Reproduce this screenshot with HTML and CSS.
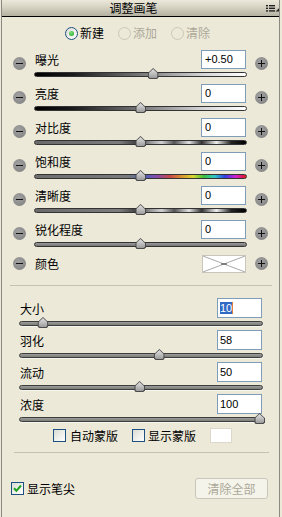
FILE: index.html
```html
<!DOCTYPE html>
<html lang="zh-CN">
<head>
    <meta charset="UTF-8">
    <meta name="viewport" content="width=device-width, initial-scale=1.0">
    <title>调整画笔</title>
    <link rel="stylesheet" href="styles.css">
</head>
<body>
    <div class="panel">
        <div class="titlebar">
            <span class="title">调整画笔</span>
            <svg class="menu-icon" width="13" height="7" viewBox="0 0 13 7">
                <rect x="0" y="0" width="2" height="1.4" fill="#222"/>
                <rect x="3" y="0" width="6" height="1.4" fill="#222"/>
                <rect x="0" y="2.6" width="2" height="1.4" fill="#222"/>
                <rect x="3" y="2.6" width="6" height="1.4" fill="#222"/>
                <rect x="0" y="5.2" width="2" height="1.4" fill="#222"/>
                <rect x="3" y="5.2" width="6" height="1.4" fill="#222"/>
                <path d="M13 3.2V6.6H9.6z" fill="#222"/>
            </svg>
        </div>

        <!-- mode -->
        <div class="modes">
            <label class="radio checked"><span class="radio-box"></span>新建</label>
            <label class="radio disabled"><span class="radio-box"></span>添加</label>
            <label class="radio disabled"><span class="radio-box"></span>清除</label>
        </div>

        <!-- adjustments -->
        <div class="adjustments">
            <div class="adj">
                <span class="step"></span>
                <div class="adj-body">
                    <div class="adj-head"><span class="adj-label">曝光</span><div class="field">+0.50</div></div>
                    <div class="track track-light"><span class="thumb" style="left:56%"></span></div>
                </div>
                <span class="step plus"></span>
            </div>
            <div class="adj">
                <span class="step"></span>
                <div class="adj-body">
                    <div class="adj-head"><span class="adj-label">亮度</span><div class="field">0</div></div>
                    <div class="track track-light"><span class="thumb" style="left:50%"></span></div>
                </div>
                <span class="step plus"></span>
            </div>
            <div class="adj">
                <span class="step"></span>
                <div class="adj-body">
                    <div class="adj-head"><span class="adj-label">对比度</span><div class="field">0</div></div>
                    <div class="track track-contrast"><span class="thumb" style="left:50%"></span></div>
                </div>
                <span class="step plus"></span>
            </div>
            <div class="adj">
                <span class="step"></span>
                <div class="adj-body">
                    <div class="adj-head"><span class="adj-label">饱和度</span><div class="field">0</div></div>
                    <div class="track track-saturation"><span class="thumb" style="left:50%"></span></div>
                </div>
                <span class="step plus"></span>
            </div>
            <div class="adj">
                <span class="step"></span>
                <div class="adj-body">
                    <div class="adj-head"><span class="adj-label">清晰度</span><div class="field">0</div></div>
                    <div class="track track-contrast"><span class="thumb" style="left:50%"></span></div>
                </div>
                <span class="step plus"></span>
            </div>
            <div class="adj">
                <span class="step"></span>
                <div class="adj-body">
                    <div class="adj-head"><span class="adj-label">锐化程度</span><div class="field">0</div></div>
                    <div class="track track-grey"><span class="thumb" style="left:50%"></span></div>
                </div>
                <span class="step plus"></span>
            </div>
            <div class="adj adj-color">
                <span class="step"></span>
                <div class="adj-body">
                    <div class="adj-head">
                        <span class="adj-label">颜色</span>
                        <svg class="swatch" width="44" height="18" viewBox="0 0 44 18">
                            <rect x="0.5" y="0.5" width="43" height="17" fill="#fff" stroke="#c9c7bd"/>
                            <path d="M1 1L43 17M43 1L1 17" stroke="#a9a9a9" stroke-width="1"/>
                            <path d="M19 9h6" stroke="#666" stroke-width="1.4"/>
                        </svg>
                    </div>
                </div>
                <span class="step plus"></span>
            </div>
        </div>

        <hr class="divider">

        <!-- brush -->
        <div class="brush">
            <div class="brush-row">
                <div class="adj-head"><span class="adj-label">大小</span><div class="field field-brush"><span class="selected">10</span><span class="caret"></span></div></div>
                <div class="track track-brush"><span class="thumb" style="left:9.5%"></span></div>
            </div>
            <div class="brush-row">
                <div class="adj-head"><span class="adj-label">羽化</span><div class="field field-brush">58</div></div>
                <div class="track track-brush"><span class="thumb" style="left:57.6%"></span></div>
            </div>
            <div class="brush-row">
                <div class="adj-head"><span class="adj-label">流动</span><div class="field field-brush">50</div></div>
                <div class="track track-brush"><span class="thumb" style="left:49.4%"></span></div>
            </div>
            <div class="brush-row">
                <div class="adj-head"><span class="adj-label">浓度</span><div class="field field-brush">100</div></div>
                <div class="track track-brush"><span class="thumb" style="left:99%"></span></div>
            </div>
        </div>

        <div class="mask-row">
            <label class="check"><span class="check-box"></span>自动蒙版</label>
            <label class="check"><span class="check-box"></span>显示蒙版</label>
            <span class="mask-color"></span>
        </div>

        <hr class="divider divider-lower">

        <div class="footer">
            <label class="check">
                <span class="check-box">
                    <svg width="11" height="11" viewBox="0 0 11 11"><path d="M2 5.2l2.4 2.6L9 2.5" fill="none" stroke="#21a121" stroke-width="2"/></svg>
                </span>显示笔尖
            </label>
            <button class="clear-all" disabled>清除全部</button>
        </div>
    </div>
</body>
</html>
```

FILE: styles.css
```css
body {
    margin: 0;
    background-color: #ece9d8;
    font-family: "Noto Sans CJK SC", "Noto Sans", sans-serif;
    font-size: 12px;
    color: #000;
}
.panel {
    margin-left: 1px;
    width: 277px;
    min-height: 517px;
    border-left: 1px solid #8a8a82;
    border-right: 1px solid #8a8a82;
}
.titlebar {
    position: relative;
    height: 16px;
    padding-right: 14px;
    display: flex;
    justify-content: center;
    align-items: center;
    background: linear-gradient(#ece9db, #d6d3c3 45%, #b3b1a1);
    border-bottom: 1px solid #000;
}
.title {
    font-size: 12px;
    line-height: 16px;
}
.menu-icon {
    position: absolute;
    right: 0;
    top: 5px;
}

/* radios */
.modes {
    display: flex;
    align-items: center;
    gap: 14px;
    height: 18px;
    margin-top: 7px;
    padding-left: 63px;
}
.radio {
    display: flex;
    align-items: center;
    line-height: 18px;
}
.radio-box {
    width: 11px;
    height: 11px;
    margin-right: 2px;
    border: 1px solid #1c5180;
    border-radius: 50%;
    background: linear-gradient(135deg, #dcdcd5, #fff);
    display: flex;
    align-items: center;
    justify-content: center;
}
.radio.checked .radio-box::after {
    content: "";
    width: 5px;
    height: 5px;
    border-radius: 50%;
    background: radial-gradient(circle at 40% 35%, #7be07b, #21a121);
}
.radio.disabled {
    color: #aca899;
}
.radio.disabled .radio-box {
    border-color: #cac8bb;
    background: none;
}

/* adjustment rows */
.adjustments {
    margin-top: 8px;
}
.adj {
    display: grid;
    grid-template-columns: 13px 213px 13px;
    column-gap: 8px;
    align-items: center;
    padding-left: 11px;
    margin-bottom: 7px;
}
.step {
    position: relative;
    width: 13px;
    height: 13px;
    border-radius: 50%;
    background: radial-gradient(circle at 42% 38%, #a2a2a2, #8a8a8a 65%, #6f6f6f);
}
.step::before {
    content: "";
    position: absolute;
    left: 3px;
    top: 6px;
    width: 7px;
    height: 1px;
    background: #111;
}
.step.plus::after {
    content: "";
    position: absolute;
    left: 6px;
    top: 3px;
    width: 1px;
    height: 7px;
    background: #111;
}
.adj-head {
    display: flex;
    justify-content: space-between;
    align-items: center;
    height: 19px;
}
.adj-label {
    padding-left: 1px;
    line-height: 19px;
}
.field {
    box-sizing: border-box;
    width: 45px;
    height: 19px;
    margin-right: 1px;
    padding-left: 3px;
    border: 1px solid #7f9db9;
    background-color: #fff;
    font-family: "Liberation Sans", Arial, sans-serif;
    font-size: 11px;
    line-height: 17px;
}
.swatch {
    display: block;
    margin-right: 1px;
}
.adj-color {
    margin-bottom: 12px;
}

/* slider tracks */
.track {
    position: relative;
    box-sizing: border-box;
    height: 5px;
    margin-top: 3px;
    border: 1px solid #333;
    border-radius: 3px;
}
.track-light {
    background: linear-gradient(to right, #000 0%, #1a1a1a 18%, #777 50%, #d6d6d6 80%, #fff 100%);
}
.track-contrast {
    background: linear-gradient(to right, #6a6a6a 0%, #7c7c7c 40%, #3a3a3a 49%, #9a9a9a 55%, #d0d0d0 60%, #555 66%, #e0e0e0 73%, #333 79%, #eee 86%, #222 93%, #000 100%);
}
.track-saturation {
    background: linear-gradient(to right, #6e6e6e 0%, #7a7a7a 44%, #4b63b8 52%, #8a4aa8 58%, #c84848 64%, #d89a30 70%, #d8d830 75%, #3cc03c 80%, #30c8c8 85%, #3040e0 90%, #d020d0 95%, #e01a1a 100%);
}
.track-grey {
    background: linear-gradient(#9a9a9a, #747474);
}
.track-brush {
    border-color: #3e3e3e;
    background: linear-gradient(#9c9c98, #7c7c78);
    box-shadow: 0 1px 0 #f6f5ee;
}
.thumb {
    position: absolute;
    top: -5px;
    width: 11px;
    height: 11px;
    transform: translateX(-50%);
    background: #4b4b4b;
    clip-path: polygon(50% 0, 100% 48%, 100% 85%, 85% 100%, 15% 100%, 0 85%, 0 48%);
}
.thumb::after {
    content: "";
    position: absolute;
    inset: 1px;
    background: linear-gradient(#e2e2e2, #9c9c9c);
    clip-path: polygon(50% 0, 100% 48%, 100% 85%, 85% 100%, 15% 100%, 0 85%, 0 48%);
}

.divider {
    margin: 0 7px 0 8px;
    border: none;
    border-top: 1px solid #c6c2b0;
}

/* brush settings */
.brush {
    padding: 12px 0 0 17px;
    width: 244px;
}
.brush-row {
    margin-bottom: 4px;
}
.brush-row .adj-head {
    height: 20px;
}
.field-brush {
    height: 20px;
    padding-left: 2px;
    line-height: 18px;
}
.selected {
    background-color: #316ac5;
    color: #fff;
}
.caret {
    display: inline-block;
    width: 1px;
    height: 12px;
    vertical-align: -2px;
    background-color: #e0803a;
}

/* checkboxes */
.mask-row {
    display: flex;
    align-items: center;
    height: 15px;
    margin-top: 6px;
    padding-left: 51px;
    gap: 14px;
}
.check {
    display: flex;
    align-items: center;
    line-height: 15px;
}
.check-box {
    box-sizing: border-box;
    width: 13px;
    height: 13px;
    margin-right: 4px;
    border: 1px solid #1c5180;
    background: linear-gradient(135deg, #dcdcd5, #fff);
    display: flex;
    align-items: center;
    justify-content: center;
}
.mask-row .check:nth-child(2) .check-box {
    margin-right: 3px;
}
.mask-color {
    width: 22px;
    height: 15px;
    background-color: #fff;
    border: 1px solid #dcd9cc;
    box-sizing: border-box;
}
.divider-lower {
    margin-top: 9px;
    margin-left: 12px;
    margin-right: 10px;
}

.footer {
    display: flex;
    justify-content: space-between;
    align-items: center;
    margin-top: 25px;
    padding: 0 11px 0 9px;
}
.footer .check-box {
    margin-right: 3px;
}
.clear-all {
    width: 73px;
    height: 21px;
    padding: 0;
    border: 1px solid #c9c7ba;
    border-radius: 3px;
    background-color: #f5f4ea;
    color: #aca899;
    font-family: "Noto Sans CJK SC", sans-serif;
    font-size: 12px;
}
```
